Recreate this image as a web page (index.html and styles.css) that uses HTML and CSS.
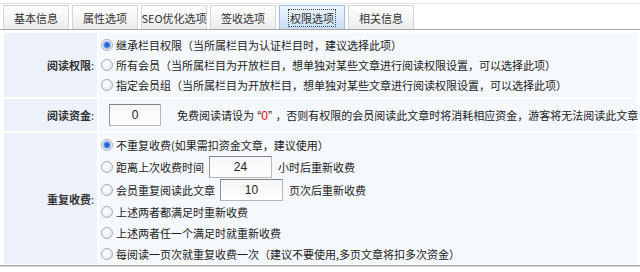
FILE: index.html
```html
<!DOCTYPE html>
<html lang="zh-CN">
<head>
<meta charset="utf-8">
<title>权限选项</title>
<link rel="stylesheet" href="styles.css">
</head>
<body>
<div class="tabs">
  <span class="tab">基本信息</span>
  <span class="tab">属性选项</span>
  <span class="tab">SEO优化选项</span>
  <span class="tab">签收选项</span>
  <span class="tab active"><span class="focus">权限选项</span></span>
  <span class="tab">相关信息</span>
</div>
<div class="form">
  <div class="label"><b>阅读权限</b>:</div>
  <div class="field list r1">
    <label class="opt"><input type="radio" name="qx" checked>继承栏目权限（当所属栏目为认证栏目时，建议选择此项）</label>
    <label class="opt"><input type="radio" name="qx">所有会员（当所属栏目为开放栏目，想单独对某些文章进行阅读权限设置，可以选择此项）</label>
    <label class="opt"><input type="radio" name="qx">指定会员组（当所属栏目为开放栏目，想单独对某些文章进行阅读权限设置，可以选择此项）</label>
  </div>

  <div class="label"><b>阅读资金</b>:</div>
  <div class="field money">
    <input class="num small" type="text" value="0">
    <span class="note">免费阅读请设为<span class="lat"> “<span class="red">0</span>” </span>，否则有权限的会员阅读此文章时将消耗相应资金，游客将无法阅读此文章</span>
  </div>

  <div class="label"><b>重复收费</b>:</div>
  <div class="field list r3">
    <label class="opt"><input type="radio" name="cf" checked>不重复收费(如果需扣资金文章，建议使用）</label>
    <label class="opt tall"><input type="radio" name="cf">距离上次收费时间<input class="num wide" type="text" value="24">小时后重新收费</label>
    <label class="opt tall"><input type="radio" name="cf">会员重复阅读此文章<input class="num wide" type="text" value="10">页次后重新收费</label>
    <label class="opt"><input type="radio" name="cf">上述两者都满足时重新收费</label>
    <label class="opt"><input type="radio" name="cf">上述两者任一个满足时就重新收费</label>
    <label class="opt"><input type="radio" name="cf">每阅读一页次就重复收费一次（建议不要使用,多页文章将扣多次资金）</label>
  </div>
</div>
<div class="bottom"></div>
</body>
</html>
```

FILE: styles.css
```css
html, body {
  margin: 0;
  padding: 0;
  background: #ffffff;
}
body {
  padding-top: 3px;
  font-family: "Noto Sans CJK SC", "Noto Sans", sans-serif;
  font-size: 11px;
  color: #222222;
}
.tabs {
  display: flex;
  gap: 3px;
  padding: 1px 0 0 3px;
  border-top: 1px solid #dce8f4;
  border-bottom: 1px solid #a3a3a3;
}
.tab {
  box-sizing: border-box;
  width: 66px;
  height: 24px;
  display: flex;
  align-items: center;
  justify-content: center;
  border: 1px solid #d3d6da;
  border-bottom: none;
  background: linear-gradient(#ffffff, #ececec);
  color: #333333;
  white-space: nowrap;
}
.tab.active {
  border-color: #9dbde0;
  background: linear-gradient(#eef5fc, #c9ddf2);
}
.focus {
  outline: 1px dotted #444444;
  outline-offset: 0;
  padding: 0 1px;
}
.form {
  display: grid;
  grid-template-columns: 93px 538px;
  grid-template-rows: 64px 32px 131px;
  gap: 2px;
  margin: 3px 0 0 4px;
}
.label {
  display: flex;
  align-items: center;
  justify-content: flex-end;
  padding-right: 3px;
  background: #edf2fa;
  color: #333333;
}
.label b {
  font-weight: bold;
}
.field {
  background: #f5f8fd;
  padding-left: 2px;
}
.list {
  display: flex;
  flex-direction: column;
}
.r1 {
  padding-top: 2px;
}
.r3 {
  padding-top: 2px;
}
.opt {
  height: 20px;
  display: flex;
  align-items: center;
  white-space: nowrap;
}
.r3 .opt {
  height: 21px;
}
.r3 .opt.tall {
  height: 23px;
}
.r3 .opt:nth-child(4) {
  height: 22px;
}
input[type="radio"] {
  appearance: none;
  -webkit-appearance: none;
  box-sizing: border-box;
  width: 12px;
  height: 12px;
  margin: 0 3px 0 0;
  border-radius: 50%;
  border: 1px solid #a7afbb;
  background: radial-gradient(circle at 40% 40%, #ffffff 0, #f4f6f8 40%, #d6dce4 100%);
  flex: none;
}
input[type="radio"]:checked {
  background: radial-gradient(circle, #1a55c0 0, #2f6fd6 2px, #8fb6ee 3.5px, #f2f5f9 4.5px, #d6dce4 100%);
}
.num {
  box-sizing: border-box;
  height: 22px;
  border: 1px solid #b4b8be;
  border-top-color: #7f848a;
  border-left-color: #8f949a;
  background: linear-gradient(#f6f6f6, #ffffff);
  text-align: center;
  font-family: "Liberation Sans", sans-serif;
  font-size: 12px;
  color: #222222;
  padding: 0;
}
.small {
  width: 52px;
}
.wide {
  width: 63px;
  margin: 0 6px 0 5px;
}
.money {
  display: flex;
  align-items: center;
  padding-left: 10px;
}
.note {
  margin-left: 16px;
  white-space: nowrap;
}
.lat {
  font-family: "Liberation Sans", sans-serif;
  font-size: 12px;
}
.red {
  color: #ff0000;
}
.bottom {
  margin-top: 1px;
  height: 1px;
  border-top: 1px solid #a0a0a0;
  background: #dddddd;
}
```
